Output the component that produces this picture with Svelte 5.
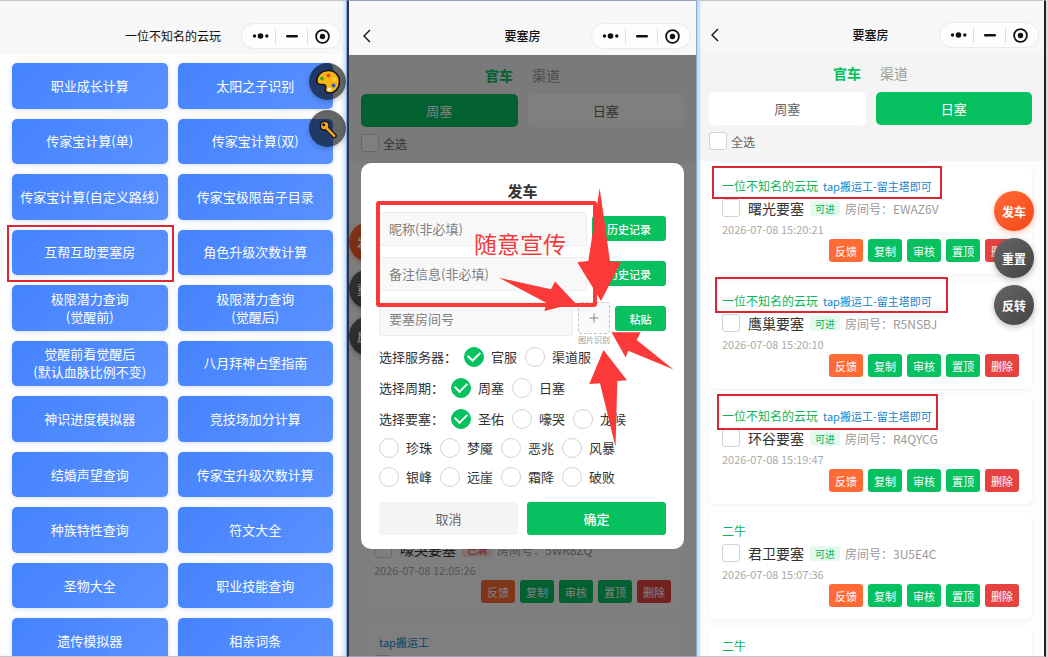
<script>
  const menu = [
    ['职业成长计算'], ['太阳之子识别'],
    ['传家宝计算(单)'], ['传家宝计算(双)'],
    ['传家宝计算(自定义路线)'], ['传家宝极限苗子目录'],
    ['互帮互助要塞房'], ['角色升级次数计算'],
    ['极限潜力查询', '(觉醒前)'], ['极限潜力查询', '(觉醒后)'],
    ['觉醒前看觉醒后', '(默认血脉比例不变)'], ['八月拜神占堡指南'],
    ['神识进度模拟器'], ['竞技场加分计算'],
    ['结婚声望查询'], ['传家宝升级次数计算'],
    ['种族特性查询'], ['符文大全'],
    ['圣物大全'], ['职业技能查询'],
    ['遗传模拟器'], ['相亲词条']
  ];

  const dailyRooms = [
    { owner: '一位不知名的云玩', note: 'tap搬运工-留主塔即可', fort: '曙光要塞', code: 'EWAZ6V', time: '2026-07-08 15:20:21' },
    { owner: '一位不知名的云玩', note: 'tap搬运工-留主塔即可', fort: '鹰巢要塞', code: 'R5NSBJ', time: '2026-07-08 15:20:10' },
    { owner: '一位不知名的云玩', note: 'tap搬运工-留主塔即可', fort: '环谷要塞', code: 'R4QYCG', time: '2026-07-08 15:19:47' },
    { owner: '二牛', fort: '君卫要塞', code: '3U5E4C', time: '2026-07-08 15:07:36' },
    { owner: '二牛' }
  ];

  const weeklyRooms = [
    {},
    {},
    {},
    { fort: '嚎哭要塞', full: true, code: '5WR8ZQ', time: '2026-07-08 12:05:26' },
    { note: 'tap搬运工', indent: true }
  ];

  const actions = [
    ['反馈', 'orange'], ['复制', 'green'], ['审核', 'green'], ['置顶', 'green'], ['删除', 'red']
  ];

  const choices = [
    { label: '选择服务器：', name: 'server', rows: [['官服', '渠道服']] },
    { label: '选择周期：', name: 'cycle', rows: [['周塞', '日塞']] },
    { label: '选择要塞：', name: 'fort', rows: [['圣佑', '嚎哭', '龙候'], ['珍珠', '梦魇', '恶兆', '风暴'], ['银峰', '远崖', '霜降', '破败']] }
  ];
</script>

{#snippet header(title, back)}
  <header>
    <div>
      {#if back}
        <button class="back" aria-label="返回">
          <svg width="9" height="14" viewBox="0 0 9 14"><path d="M8 1 2 7l6 6" fill="none" stroke="#111" stroke-width="1.4" /></svg>
        </button>
      {/if}
    </div>
    <h1>{title}</h1>
    <button class="capsule" aria-label="更多">
      <svg width="98" height="24" viewBox="0 0 98 24">
        <g fill="#111">
          <circle cx="12.5" cy="12" r="1.7" /><circle cx="18.5" cy="12" r="2.8" /><circle cx="24.8" cy="12" r="1.7" />
          <rect x="44" y="11" width="12" height="2.6" rx="1.3" />
          <circle cx="80.5" cy="12.5" r="2.7" />
        </g>
        <circle cx="80.5" cy="12.5" r="6.4" fill="none" stroke="#111" stroke-width="1.8" />
        <path d="M33.5 5v15M65.5 5v15" stroke="#ddd" />
      </svg>
    </button>
  </header>
{/snippet}

{#snippet filters(active, id)}
  <div class="filters">
    <nav class="tabs"><button class="on">官车</button><button>渠道</button></nav>
    <div class="segments">
      {#each ['周塞', '日塞'] as s}
        <button class:on={s === active}>{s}</button>
      {/each}
    </div>
    <div class="all"><input type="checkbox" {id} /><label for={id}>全选</label></div>
  </div>
{/snippet}

{#snippet card(room)}
  <article>
    <div class="names" class:indent={room.indent}>
      {#if room.owner}<span class="owner">{room.owner}</span>{/if}
      {#if room.note}<span class="note">{room.note}</span>{/if}
    </div>
    <div class="room">
      <input type="checkbox" aria-label="选择房间" />
      {#if room.fort}
        <strong>{room.fort}</strong>
        <span class="tag" class:full={room.full}>{room.full ? '已满' : '可进'}</span>
        <span class="code">房间号：{room.code}</span>
      {/if}
    </div>
    {#if room.time}
      <time>{room.time}</time>
      <div class="actions">
        {#each actions as [text, tone]}
          <button class={tone}>{text}</button>
        {/each}
      </div>
    {/if}
  </article>
{/snippet}

{#snippet floats()}
  <div class="floats">
    <button class="go">发车</button><button>重置</button><button>反转</button>
  </div>
{/snippet}

<main>
  <section class="home">
    {@render header('一位不知名的云玩', false)}
    <div class="menu">
      {#each menu as lines}
        <button>{#each lines as line}<span>{line}</span>{/each}</button>
      {/each}
    </div>
    <div class="tools">
      <button aria-label="主题">
        <svg width="26" height="26" viewBox="0 0 26 26">
          <path d="M2 13C1 6.500 6.500 1.500 13.500 1.500 20 1.500 24.500 6.500 24.500 12.500 24.500 19 20 24 14.500 24 11 24 9.500 21.500 10.500 19 11.200 17 10.500 15.500 8 15.500 5 15.500 2.300 16 2 13Z" fill="#fcb414" stroke="#14161c" stroke-width="1.600" />
          <circle cx="7" cy="9.500" r="2" fill="#43a928" /><circle cx="13.500" cy="6.500" r="2" fill="#e5492d" />
          <circle cx="19.500" cy="10.500" r="1.800" fill="#ffd23c" /><circle cx="18.500" cy="16.500" r="2" fill="#2a5fb8" /><circle cx="14.500" cy="20.300" r="1.800" fill="#fff4dc" />
        </svg>
      </button>
      <button aria-label="密钥">
        <svg width="20" height="20" viewBox="0 0 20 20">
          <path d="M9.500 10 16.500 17" stroke="#14161c" stroke-width="4.600" stroke-linecap="round" />
          <circle cx="6.700" cy="6.700" r="4.400" fill="#f9a51a" stroke="#14161c" stroke-width="1.500" />
          <path d="M8.500 9 16.300 16.800" stroke="#f9a51a" stroke-width="2.500" stroke-linecap="round" />
          <circle cx="5.700" cy="5.700" r="1.500" fill="#14161c" />
        </svg>
      </button>
    </div>
    <div class="mark home-mark"></div>
  </section>

  <section class="weekly">
    {@render header('要塞房', true)}
    <div class="body">
      {@render filters('周塞', 'all-weekly')}
      <div class="list">{#each weeklyRooms as room}{@render card(room)}{/each}</div>
      {@render floats()}
      <div class="overlay">
        <form class="dialog">
          <h2>发车</h2>
          <div class="field">
            <input type="text" aria-label="昵称" placeholder="昵称(非必填)" /><button type="button" class="wide">历史记录</button>
          </div>
          <div class="field">
            <input type="text" aria-label="备注信息" placeholder="备注信息(非必填)" /><button type="button" class="wide">历史记录</button>
          </div>
          <div class="field">
            <input type="text" aria-label="要塞房间号" placeholder="要塞房间号" />
            <div class="upload">
              <button type="button" aria-label="图片识别"><svg width="10" height="10" viewBox="0 0 10 10"><path d="M5 .5v9M.5 5h9" stroke="#888" /></svg></button>
              <small>图片识别</small>
            </div>
            <button type="button" class="paste">粘贴</button>
          </div>
          {#each choices as group}
            <fieldset>
              {#each group.rows as row, r}
                <div class="options">
                  {#if r === 0}<span class="legend">{group.label}</span>{/if}
                  {#each row as option, i}
                    <label><input type="radio" name={group.name} checked={r === 0 && i === 0} />{option}</label>
                  {/each}
                </div>
              {/each}
            </fieldset>
          {/each}
          <div class="confirm"><button type="button">取消</button><button type="button" class="ok">确定</button></div>
        </form>
      </div>
    </div>
    <div class="frame"></div>
    <p class="shout">随意宣传</p>
    <svg class="arrows" width="347" height="657" viewBox="349 0 347 657" fill="#fb3939">
      <path d="M599.700 188 610 261.500 621 262.300 601 301 577.300 262.300 588.300 261Z" />
      <path d="M499 277.700 551 289.300 555 281.500 575.500 303.300 544.300 311 547 303.300Z" />
      <path d="M611.500 332.300H640.700L636.700 340 673.500 369.500 628.300 350.700 625.700 357.500Z" />
      <path d="M603.500 350 627 380.300 617.300 381 615.500 447 600 383.300 589.300 384Z" />
    </svg>
  </section>

  <section class="daily">
    {@render header('要塞房', true)}
    <div class="body">
      {@render filters('日塞', 'all-daily')}
      <div class="list">{#each dailyRooms as room}{@render card(room)}{/each}</div>
    </div>
    {@render floats()}
    <div class="mark m1"></div>
    <div class="mark m2"></div>
    <div class="mark m3"></div>
  </section>
</main>

<style>
  :global(body) { margin: 0; background: #ddd; }
  main {
    display: grid;
    grid-template-columns: 347fr 349fr 352fr;
    height: 100vh;
    overflow: hidden;
    font-family: 'Noto Sans CJK SC', sans-serif;
    font-size: 12px;
    color: #333;
  }
  main * { box-sizing: border-box; }
  button { font: inherit; color: inherit; border: 0; padding: 0; margin: 0; background: none; white-space: nowrap; }
  section {
    position: relative;
    display: flex;
    flex-direction: column;
    min-width: 0;
    min-height: 0;
    overflow: hidden;
    border-top: 1px solid #c4c5c9;
    border-bottom: 1px solid #c4c5c9;
    background: #fdfdfd;
  }
  .home { --head: 53px; border-right: 1px solid #8fa9cc; box-shadow: inset -4px 0 4px -2px #b9d8fb; }
  .weekly { --head: 54px; border-left: 2px solid #26354c; border-top-color: #93a3bd; border-bottom-color: #93a3bd; }
  .daily { --head: 52px; border-left: 1px solid #8ea9d6; border-right: 2px solid #222; margin-right: 2px; }
  .daily::after {
    content: '';
    position: absolute;
    inset: 0 auto 0 0;
    width: 5px;
    background: linear-gradient(90deg, #b9d2f8, #e9effa00);
  }

  header {
    flex: none;
    display: grid;
    grid-template-columns: 1fr auto 1fr;
    align-items: center;
    height: var(--head);
    padding: 16px 5px 0;
    background: #f7f7f7;
  }
  .home header { margin-right: 4px; padding-right: 1px; padding-left: 5px; }
  h1 { margin: 0; font-size: 12px; font-weight: 400; line-height: 18px; color: #111; }
  .weekly h1, .daily h1 { font-weight: 500; }
  .back { display: block; margin-left: 8px; }
  .back svg, .capsule svg { display: block; }
  .capsule { justify-self: end; border: 1px solid #ebebeb; border-radius: 13px; background: #fdfdfd; }

  .menu {
    flex: 1;
    display: grid;
    grid-template-columns: 1fr 1fr;
    grid-template-rows: repeat(11, minmax(40px, 1fr));
    gap: 10px;
    padding: 9px 13px 0 12px;
    margin-bottom: -8px;
  }
  .menu button {
    display: flex;
    flex-direction: column;
    align-items: center;
    justify-content: center;
    border-radius: 5px;
    background: linear-gradient(135deg, #4583ff, #5a91ff);
    box-shadow: 0 1px 4px #4a86ff38;
    color: #fff;
    font-size: 13px;
    line-height: 18px;
  }
  .tools { position: absolute; right: 0; top: 62px; display: grid; gap: 10px; }
  .tools button {
    display: grid;
    place-items: center;
    width: 37px;
    height: 37px;
    border-radius: 50%;
    background: #00000099;
    box-shadow: 0 2px 5px #0003;
  }

  .body { position: relative; flex: 1; min-height: 0; overflow: hidden; }
  .filters { display: flex; flex-direction: column; padding: 10px 12px 11px; background: #f4f4f4; }
  .tabs { display: flex; justify-content: center; gap: 19px; font-size: 14px; line-height: 20px; color: #999; }
  .tabs .on { color: #07c160; font-weight: 700; }
  .segments { display: grid; grid-template-columns: 1fr 1fr; gap: 10px; margin: 9px 0 7px; }
  .segments button { height: 33px; border-radius: 5px; background: #fff; color: #666; font-size: 13px; }
  .segments .on { background: #07c160; color: #fff; }
  .all { display: flex; align-items: center; gap: 4px; height: 18px; color: #666; }
  input[type='checkbox'] {
    appearance: none;
    flex: none;
    width: 18px;
    height: 18px;
    margin: 0;
    border: 1px solid #d2d2d2;
    border-radius: 3px;
    background: #fff;
  }

  .list { display: grid; gap: 8px; padding: 0 12px; }
  .daily .list { padding-top: 6px; }
  article {
    display: grid;
    align-content: start;
    gap: 2px;
    min-height: 107px;
    padding: 10px 13px 12px;
    border-radius: 6px;
    background: #fff;
    box-shadow: 0 1px 4px #0000000d;
  }
  .names { display: flex; gap: 5px; height: 18px; line-height: 18px; }
  .owner { color: #07b55b; }
  .note { color: #1583cc; font-size: 11px; }
  .indent { padding-left: 5px; }
  .room { display: flex; align-items: center; height: 22px; }
  strong { margin-left: 8px; font-size: 14px; font-weight: 400; }
  .tag { margin: 0 5px 0 6px; padding: 0 5px; border-radius: 3px; background: #e6f9ee; color: #07b55b; font-size: 10px; line-height: 15px; }
  .tag.full { background: #ffdede; color: #e53935; }
  .code { color: #999; }
  time { height: 16px; color: #aaa; font-size: 11px; line-height: 16px; }
  .actions { display: flex; justify-content: flex-end; gap: 5px; }
  .actions button { width: 34px; height: 23px; border-radius: 3px; color: #fff; font-size: 11px; }
  .orange { background: #ff6b35; }
  .green { background: #07c160; }
  .red { background: #e64340; }

  .floats { position: absolute; display: grid; gap: 7px; }
  .daily .floats { right: 10px; top: 190px; }
  .weekly .floats { left: 0; top: 167px; }
  .floats button {
    width: 40px;
    height: 40px;
    border-radius: 50%;
    background: linear-gradient(135deg, #666, #444);
    box-shadow: 0 2px 6px #0004;
    color: #fff;
    font-weight: 700;
  }
  .floats .go { background: linear-gradient(135deg, #ff6b35, #f4481a); box-shadow: 0 2px 6px #ff6b3566; }

  .overlay { position: absolute; inset: 0; display: grid; align-items: center; padding: 0 12px; background: #00000080; }
  .dialog { display: grid; gap: 11px; padding: 16px 18px 14px; border-radius: 10px; background: #fff; font-size: 13px; }
  h2 { margin: 0 0 -2px; text-align: center; font-size: 15px; line-height: 24px; }
  .field { display: flex; align-items: center; gap: 5px; height: 34px; }
  .field input {
    flex: 1;
    min-width: 0;
    height: 34px;
    padding: 0 9px;
    border: 1px solid #ececec;
    border-radius: 3px;
    background: #f8f8f8;
    font: inherit;
  }
  .field input::placeholder { color: #808080; }
  .wide, .paste { height: 25px; border-radius: 3px; background: #07c160; color: #fff; font-size: 11px; font-weight: 500; }
  .wide { width: 74px; }
  .paste { width: 51px; }
  .upload { display: grid; justify-items: center; align-self: start; width: 32px; }
  .upload button { display: grid; place-items: center; width: 32px; height: 32px; border: 1px dashed #c4c4c4; border-radius: 3px; background: #fafafa; }
  small { color: #999; font-size: 8px; line-height: 12px; white-space: nowrap; }
  fieldset { display: grid; gap: 9px; min-width: 0; margin: 0; padding: 0; border: 0; }
  .options { display: flex; align-items: center; gap: 8px; height: 20px; white-space: nowrap; }
  .legend { margin-right: -1px; }
  .options label { display: flex; align-items: center; gap: 7px; }
  input[type='radio'] {
    appearance: none;
    display: grid;
    place-items: center;
    width: 20px;
    height: 20px;
    margin: 0;
    border: 1px solid #d4d4d4;
    border-radius: 50%;
    background: #fff;
  }
  input[type='radio']:checked { border-color: #07c160; background: #07c160; }
  input[type='radio']:checked::after {
    content: '';
    width: 10px;
    height: 6px;
    margin-bottom: 3px;
    border: solid #fff;
    border-width: 0 0 2px 2px;
    transform: rotate(-45deg);
  }
  .confirm { display: grid; grid-template-columns: 1fr 1fr; gap: 9px; margin-top: 4px; }
  .confirm button { height: 33px; border-radius: 3px; background: #f4f4f4; color: #666; }
  .confirm .ok { background: #07c160; color: #fff; font-weight: 500; }

  .mark { position: absolute; z-index: 2; border: 2px solid #dc2630; pointer-events: none; }
  .home-mark { left: 7px; top: 224px; width: 167px; height: 57px; }
  .m1 { left: 15px; top: 165px; width: 230px; height: 33px; }
  .m2 { left: 18px; top: 276px; width: 233px; height: 36px; }
  .m3 { left: 20px; top: 393px; width: 221px; height: 36px; }
  .frame { position: absolute; left: 27px; top: 200px; width: 221px; height: 106px; border: 4px solid #fb3939; border-radius: 3px; pointer-events: none; }
  .shout { position: absolute; left: 125px; top: 225px; margin: 0; color: #f53a3a; font-size: 23px; line-height: 34px; }
  .arrows { position: absolute; left: 0; top: -1px; pointer-events: none; }
</style>
